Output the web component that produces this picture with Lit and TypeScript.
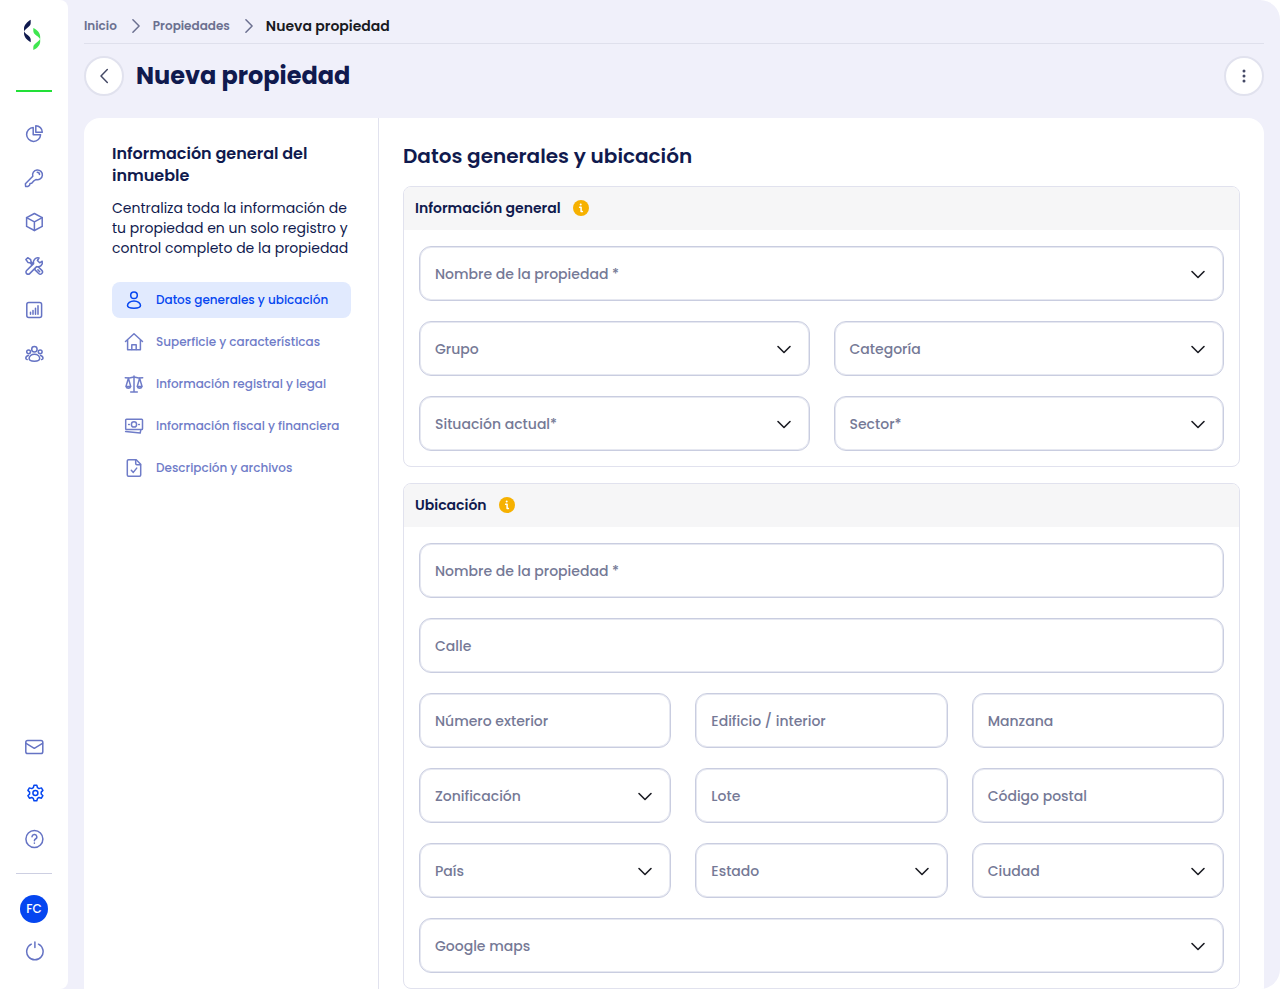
import { LitElement, html, svg, css, nothing } from "lit";
import { customElement, property, state } from "lit/decorators.js";
import { classMap } from "lit/directives/class-map.js";

const ICONS: Record<string, unknown> = {
  pie: svg`<path d="M9.200 3.400a7 7 0 1 0 7.400 7.400H9.200z"/><path d="M11.800 1.700v6.500h6.500a6.500 6.500 0 0 0-6.500-6.500z"/>`,
  key: svg`<path d="M8.800 8.300a4.900 4.900 0 1 1 3.200 3.200l-2.500 1.700-1.800 2-1.700.4-.5 1.800-1.500 1-2.400.1-.2-2.700z"/><path d="M13.200 4.300c1.400 0 2.300.9 2.300 2.300"/>`,
  box: svg`<path d="M10.400 1.500l7.800 4.100v8.800l-7.800 4.100-7.800-4.100V5.600z"/><path d="M2.600 5.600l7.800 4.200 7.800-4.200M10.400 9.800v8.700"/>`,
  tools: svg`<path d="M1.900 3.500l1.800-1.800 3 1.900.3 2 5 5 1.900-.1 3.900 3.900a2.150 2.150 0 0 1-3.100 3.100l-3.900-3.900.1-1.900-5-5-2-.3z"/><path d="M13.900 13.900l1.800 1.800"/><path fill="#fff" d="M18.200 5.200l-2.500 1.600-2.300-2.300 1.600-2.500a4.400 4.400 0 0 0-5.400 5.600L2.600 14.500a2.150 2.150 0 0 0 3.100 3.100l6.900-7a4.400 4.400 0 0 0 5.600-5.400z"/>`,
  chart: svg`<rect x="2.800" y="2.600" width="14.800" height="14.800" rx="2"/><path d="M6.500 12.300v2M9 10.600v3.700M11.500 8.300v6M14 5.800v8.500"/>`,
  people: svg`<circle cx="10.400" cy="5.200" r="2.700"/><circle cx="4.600" cy="7.800" r="1.900"/><circle cx="16.200" cy="7.800" r="1.900"/><path d="M10.400 10.200c-3.100 0-5.300 2-5.300 4.400 0 1.700 2.200 2.700 5.300 2.700s5.300-1 5.300-2.700c0-2.400-2.200-4.400-5.300-4.400zM4.300 11.600c-1.600.4-2.500 1.500-2.500 2.600 0 .6.500 1.100 1.400 1.400M16.500 11.600c1.600.4 2.500 1.500 2.500 2.600 0 .6-.5 1.100-1.400 1.400"/>`,
  mail: svg`<rect x="1.800" y="3.500" width="17" height="13" rx="1.800"/><path d="M2.100 6.300l8.200 5 8.200-5"/>`,
  gear: svg`<path d="M10 2.300h2.800l.7 2.400 1.500.9 2.400-.7 1.500 2.500-1.700 1.700v1.800l1.700 1.800-1.500 2.500-2.400-.7-1.500.9-.7 2.400H10l-.7-2.400-1.500-.9-2.400.7-1.500-2.500 1.700-1.800V9.100L3.900 7.400l1.500-2.500 2.400.7 1.500-.9z"/><circle cx="11.400" cy="10" r="2.500"/>`,
  help: svg`<circle cx="10.400" cy="10" r="8.500"/><path d="M8 7.800a2.400 2.400 0 1 1 3.500 2.200c-.8.4-1.100.8-1.100 1.700"/><path d="M10.400 14v.2"/>`,
  power: svg`<path d="M7.300 3.200a8.200 8.200 0 1 0 7.200 0M10.900 1v5.600"/>`,
  user: svg`<circle cx="10" cy="5.200" r="3.300"/><path d="M10 10.900c-3.800 0-6.500 2.200-6.500 4.600 0 1.600 2.600 2.700 6.500 2.700s6.500-1.100 6.500-2.700c0-2.400-2.700-4.600-6.500-4.600z"/>`,
  house: svg`<path d="M1.500 9.500L10 1.700l8.500 7.800M3.600 7.800v9.900h12.800V7.800"/><path d="M7.800 17.500v-4.700h4.400v4.700"/>`,
  scale: svg`<path d="M10 2v15.600M6.700 17.900h6.600M1.300 3.800l4 .2L10 3l4.700 1 4-.2"/><path d="M4.400 4.300L1.900 12.600a2.600 2.600 0 0 0 4.900 0zM15.600 4.300l-2.400 8.300a2.600 2.600 0 0 0 4.900 0zM1.900 12.600h4.900M13.200 12.600h4.900"/>`,
  money: svg`<rect x="1.700" y="3.200" width="16.800" height="10.400" rx=".8"/><circle cx="10" cy="8.400" r="2.600"/><path d="M4.600 8.400h.7M14.700 8.400h.7M1.600 15.600l14.600 1.500.6-3.200"/>`,
  file: svg`<path d="M4.500 1.700h7.700l4.500 4.500v10.900a1.200 1.200 0 0 1-1.200 1.200h-11a1.200 1.200 0 0 1-1.200-1.200V2.900a1.200 1.200 0 0 1 1.200-1.200z"/><path d="M11.700 1.900v3.600a1.200 1.200 0 0 0 1.200 1.200h3.600M7.300 12.300l2 2.100 3.400-4.300"/>`,
  down: svg`<path d="M4 7.500l6 6 6-6"/>`,
  left: svg`<path d="M13.300 3.500L7 10l6.300 6.500"/>`,
  right: svg`<path d="M7.900 3.800l6.200 6.200-6.200 6.200"/>`,
  dots: svg`<g fill="currentColor" stroke="none"><circle cx="10" cy="5" r="1.500"/><circle cx="10" cy="10" r="1.500"/><circle cx="10" cy="15" r="1.500"/></g>`,
  info: svg`<circle cx="10" cy="10" r="8" fill="#f6b100" stroke="none"/><circle cx="9.700" cy="6.500" r="1" fill="#fff" stroke="none"/><path stroke="#fff" d="M8.600 9.200h1.500v4.200M10.100 13.500h1.300"/>`,
};

const icon = (name: string) =>
  html`<svg class="icon icon-${name}" viewBox="0 0 20 20" aria-hidden="true">${ICONS[name]}</svg>`;

const iconStyles = css`
  .icon {
    display: block;
    flex: none;
    width: 20px;
    height: 20px;
    fill: none;
    stroke: currentColor;
    stroke-width: 1.5;
    stroke-linecap: round;
    stroke-linejoin: round;
  }
`;

@customElement("side-rail")
class SideRail extends LitElement {
  static styles = [
    iconStyles,
    css`
      :host {
        display: flex;
        flex-direction: column;
        box-sizing: border-box;
        flex: none;
        width: 68px;
        padding: 0 16px 28px;
        background: #fff;
        border-radius: 0 8px 8px 0;
        color: #6573c4;
      }
      .brand {
        display: flex;
        justify-content: center;
        box-sizing: border-box;
        height: 92px;
        padding: 18px 4px 0 0;
        border-bottom: 2px solid #22e038;
      }
      .logo {
        width: 20px;
        height: 34px;
      }
      nav {
        display: flex;
        flex-direction: column;
        align-items: center;
        gap: 24px;
      }
      .top {
        margin: 32px 0 24px;
      }
      .bottom {
        gap: 26px;
        margin-top: auto;
        padding-bottom: 24px;
        border-bottom: 1px solid #cdcfe2;
      }
      a {
        color: inherit;
      }
      a.active {
        color: #0546f0;
      }
      .account {
        display: flex;
        flex-direction: column;
        align-items: center;
        gap: 18px;
        padding-top: 21px;
      }
      .avatar,
      .power {
        display: grid;
        place-items: center;
        padding: 0;
        border: 0;
        background: none;
        color: inherit;
        cursor: pointer;
      }
      .avatar {
        width: 28px;
        height: 28px;
        border-radius: 50%;
        background: #0546f0;
        color: #fff;
        font: 500 12px/16px var(--font);
      }
    `,
  ];

  render() {
    const top = [
      ["pie", "Panel"],
      ["key", "Rentas"],
      ["box", "Inventario"],
      ["tools", "Mantenimiento"],
      ["chart", "Reportes"],
      ["people", "Usuarios"],
    ];
    const bottom = [
      ["mail", "Mensajes"],
      ["gear", "Ajustes"],
      ["help", "Ayuda"],
    ];
    return html`
      <div class="brand">
        <svg class="logo" viewBox="0 0 20 34" aria-hidden="true">
          <path fill="#101a4e" d="M8.700 1.800C5.200 3.800 2 7.200 2 10.600v2.900c1.200-3.300 6.700-4.600 6.700-8.600zM2 13.200c1 2.800 6.700 4.600 6.700 8.300v2.700C4.600 22 2 18.400 2 15.200z"/>
          <path fill="#3fe650" d="M11.300 10.100c4.300 2 6.900 5.200 6.900 8.700v2.600c-1.200-3.300-6.900-4.400-6.900-8.400zM18.200 20.500v3c0 3.400-2.700 6.600-6.900 8.600v-2.900c0-3.800 5.900-5.300 6.900-8.700z"/>
        </svg>
      </div>
      <nav class="top">
        ${top.map(([i, t]) => html`<a href="#" aria-label=${t}>${icon(i)}</a>`)}
      </nav>
      <nav class="bottom">
        ${bottom.map(
          ([i, t]) =>
            html`<a href="#" class=${classMap({ active: i === "gear" })} aria-label=${t}>${icon(i)}</a>`,
        )}
      </nav>
      <div class="account">
        <button class="avatar">FC</button>
        <button class="power" aria-label="Salir">${icon("power")}</button>
      </div>
    `;
  }
}

@customElement("form-field")
class FormField extends LitElement {
  @property() label = "";
  @property({ type: Boolean }) choice = false;

  static styles = [
    iconStyles,
    css`
      :host {
        display: grid;
        grid-template-columns: minmax(0, 1fr) auto;
        align-items: center;
        height: 55px;
        font: 500 14px/20px var(--font);
      }
      .control {
        grid-area: 1 / 1 / 2 / 3;
        box-sizing: border-box;
        width: 100%;
        height: 100%;
        padding: 0 16px;
        border: 1px solid #c9cde0;
        border-radius: 12px;
        box-shadow: inset 0 0 0 1px #e6e8f1;
        background: #fff;
        color: #101a4e;
        font: inherit;
        appearance: none;
        outline: none;
      }
      .control:focus {
        border-color: #0546f0;
      }
      label {
        grid-area: 1 / 1;
        z-index: 1;
        padding-left: 16px;
        color: #757996;
        white-space: nowrap;
        pointer-events: none;
      }
      .control:valid + label {
        align-self: start;
        font-size: 12px;
      }
      .icon {
        grid-area: 1 / 2;
        z-index: 1;
        margin-right: 16px;
        stroke: #1c1d24;
        stroke-width: 1.6;
        pointer-events: none;
      }
    `,
  ];

  render() {
    return html`
      ${this.choice
        ? html`<select class="control" id="control" required>
            <option value=""></option>
          </select>`
        : html`<input class="control" id="control" type="text" required />`}
      <label for="control">${this.label}</label>
      ${this.choice ? icon("down") : nothing}
    `;
  }
}

@customElement("form-card")
class FormCard extends LitElement {
  @property() heading = "";

  static styles = [
    iconStyles,
    css`
      :host {
        display: block;
        border: 1px solid #e1e2ee;
        border-radius: 8px;
        overflow: hidden;
      }
      header {
        display: flex;
        align-items: center;
        box-sizing: border-box;
        gap: 10px;
        height: 43px;
        padding: 0 11px 2px;
        background: #f6f6f7;
      }
      h3 {
        margin: 0;
        color: #101a4e;
        font: 600 14px/20px var(--font);
      }
      .body {
        display: grid;
        gap: 20px;
        padding: 16px 15px 15px;
      }
    `,
  ];

  render() {
    return html`
      <header>
        <h3>${this.heading}</h3>
        ${icon("info")}
      </header>
      <div class="body"><slot></slot></div>
    `;
  }
}

type Field = { label: string; choice?: boolean };
const text = (label: string): Field => ({ label });
const choice = (label: string): Field => ({ label, choice: true });

const CARDS: { heading: string; rows: Field[][] }[] = [
  {
    heading: "Información general",
    rows: [
      [choice("Nombre de la propiedad *")],
      [choice("Grupo"), choice("Categoría")],
      [choice("Situación actual*"), choice("Sector*")],
    ],
  },
  {
    heading: "Ubicación",
    rows: [
      [text("Nombre de la propiedad *")],
      [text("Calle")],
      [text("Número exterior"), text("Edificio / interior"), text("Manzana")],
      [choice("Zonificación"), text("Lote"), text("Código postal")],
      [choice("País"), choice("Estado"), choice("Ciudad")],
      [choice("Google maps")],
    ],
  },
];

const STEPS = [
  ["user", "Datos generales y ubicación"],
  ["house", "Superficie y características"],
  ["scale", "Información registral y legal"],
  ["money", "Información fiscal y financiera"],
  ["file", "Descripción y archivos"],
];

@customElement("app-root")
class AppRoot extends LitElement {
  @state() private step = 0;

  static styles = [
    iconStyles,
    css`
      :host {
        --font: Poppins, Inter, sans-serif;
        display: flex;
        height: 100vh;
        overflow: hidden;
        background: #f0f0fa;
        border-radius: 0 20px 20px 0;
        color: #101a4e;
        font: 400 14px/20px var(--font);
      }
      main {
        display: flex;
        flex-direction: column;
        flex: 1;
        min-width: 0;
        padding: 0 16px;
      }
      .crumbs {
        display: flex;
        align-items: center;
        box-sizing: border-box;
        height: 44px;
        padding-top: 9px;
        border-bottom: 1px solid #dfe0ec;
        gap: 8px;
        color: #6c7090;
        font-size: 12px;
        font-weight: 600;
      }
      .crumbs a {
        color: inherit;
        text-decoration: none;
      }
      .crumbs .current {
        color: #191a22;
        font-size: 14px;
      }
      .title {
        display: flex;
        align-items: center;
        gap: 12px;
        padding: 12px 0 22px;
      }
      h1 {
        flex: 1;
        margin: 0;
        font-size: 24px;
        font-weight: 700;
        line-height: 36px;
      }
      .round {
        display: grid;
        place-items: center;
        box-sizing: border-box;
        width: 40px;
        height: 40px;
        padding: 0;
        border: 2px solid #e1e2ee;
        border-radius: 50%;
        background: #fff;
        color: #454966;
        cursor: pointer;
      }
      .panel {
        display: flex;
        flex: 1;
        min-height: 0;
        overflow-y: auto;
        scrollbar-width: none;
        background: #fff;
        border-radius: 16px 16px 0 0;
      }
      aside {
        box-sizing: border-box;
        flex: none;
        width: 295px;
        min-height: 100%;
        height: max-content;
        padding: 25px 27px 24px 28px;
        border-right: 1px solid #e1e2ee;
      }
      aside h2 {
        margin: 0 0 11px;
        font-size: 16px;
        font-weight: 600;
        line-height: 22px;
      }
      aside p {
        margin: 0 0 24px;
      }
      .steps {
        display: grid;
        gap: 6px;
      }
      .step {
        display: flex;
        align-items: center;
        gap: 12px;
        height: 36px;
        padding: 0 12px;
        border-radius: 8px;
        color: #6f7cc8;
        font-size: 12px;
        font-weight: 500;
        text-decoration: none;
        white-space: nowrap;
      }
      .step.active {
        background: #e1eafe;
        color: #0546f0;
      }
      .form {
        display: grid;
        align-content: start;
        flex: 1;
        min-width: 0;
        height: max-content;
        gap: 16px;
        padding: 24px 24px 0;
      }
      .form h2 {
        margin: 0;
        font-size: 20px;
        font-weight: 600;
        line-height: 28px;
      }
      .row {
        display: grid;
        grid-auto-flow: column;
        grid-auto-columns: minmax(0, 1fr);
        gap: 24px;
      }
    `,
  ];

  render() {
    return html`
      <side-rail></side-rail>
      <main>
        <nav class="crumbs">
          <a href="#">Inicio</a>${icon("right")}<a href="#">Propiedades</a>${icon("right")}
          <span class="current">Nueva propiedad</span>
        </nav>
        <div class="title">
          <button class="round" aria-label="Volver">${icon("left")}</button>
          <h1>Nueva propiedad</h1>
          <button class="round" aria-label="Opciones">${icon("dots")}</button>
        </div>
        <div class="panel">
          <aside>
            <h2>Información general del inmueble</h2>
            <p>Centraliza toda la información de tu propiedad en un solo registro y control completo de la propiedad</p>
            <nav class="steps">
              ${STEPS.map(
                ([i, label], n) => html`<a
                  href="#"
                  class=${classMap({ step: true, active: n === this.step })}
                  @click=${(e: Event) => {
                    e.preventDefault();
                    this.step = n;
                  }}
                  >${icon(i)}${label}</a
                >`,
              )}
            </nav>
          </aside>
          <section class="form">
            <h2>Datos generales y ubicación</h2>
            ${CARDS.map(
              (card) => html`<form-card heading=${card.heading}>
                ${card.rows.map(
                  (row) => html`<div class="row">
                    ${row.map(
                      (f) => html`<form-field label=${f.label} ?choice=${!!f.choice}></form-field>`,
                    )}
                  </div>`,
                )}
              </form-card>`,
            )}
          </section>
        </div>
      </main>
    `;
  }
}
